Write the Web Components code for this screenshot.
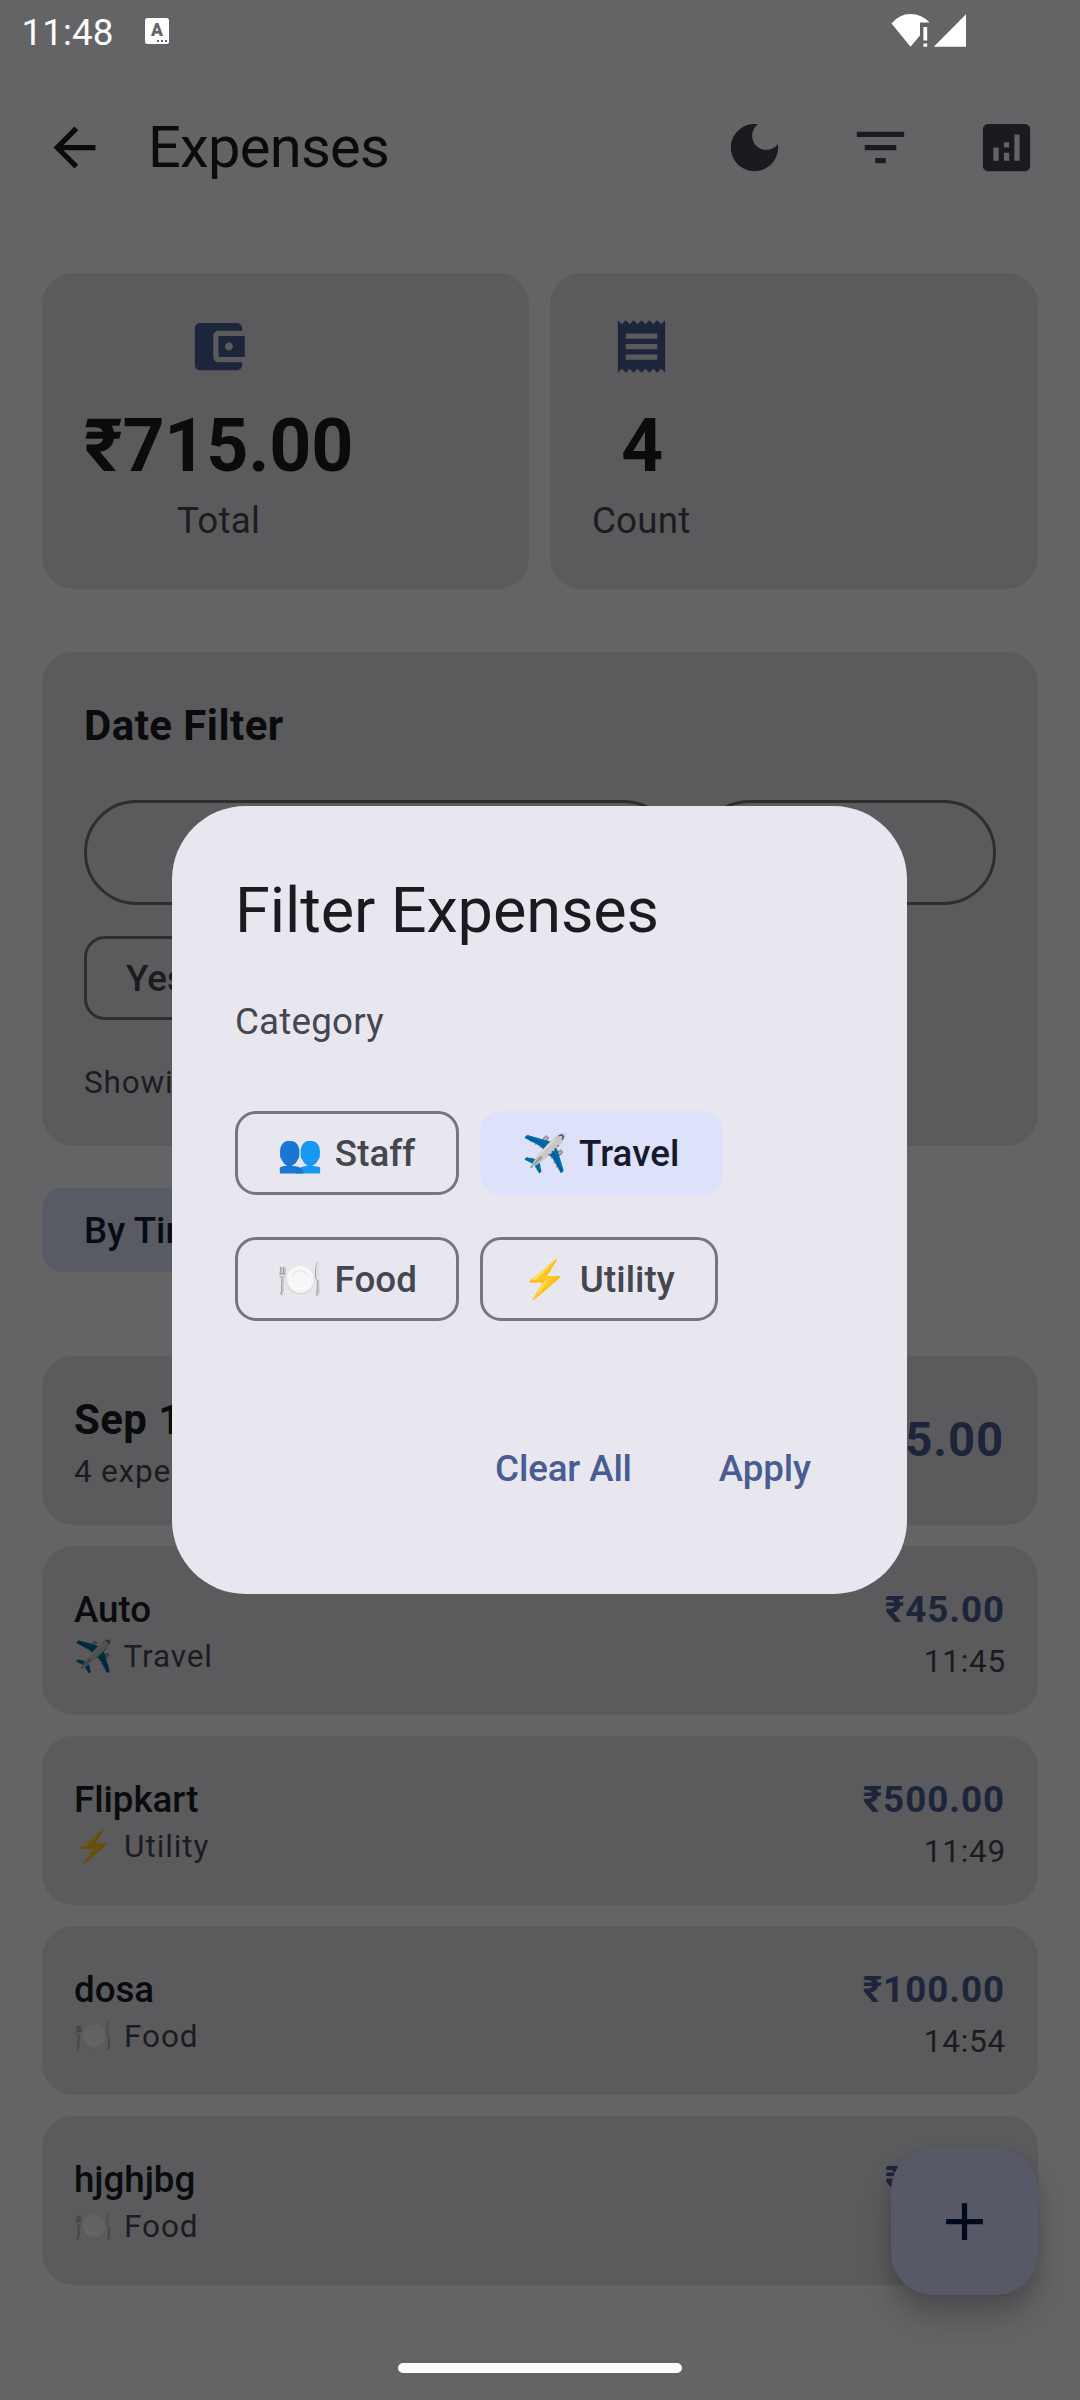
<!DOCTYPE html>
<html lang="en">
<head>
<meta charset="utf-8">
<title>Expenses</title>
<style>
  html, body { margin: 0; padding: 0; }
  body { width: 1080px; height: 2400px; overflow: hidden; background: #646466; font-family: Roboto, "Noto Color Emoji", sans-serif; }
</style>
</head>
<body>
<expense-app></expense-app>
<script>
const define = (name, html, setup) => {
  const tpl = document.createElement('template');
  tpl.innerHTML = html;
  customElements.define(name, class extends HTMLElement {
    constructor() {
      super();
      this.attachShadow({ mode: 'open' }).append(tpl.content.cloneNode(true));
    }
    connectedCallback() { if (setup) setup(this, this.shadowRoot); }
  });
};

const ICONS = {
  back: 'M20 11H7.83l5.59-5.59L12 4l-8 8 8 8 1.41-1.41L7.83 13H20v-2z',
  moon: 'M12 3c-4.97 0-9 4.03-9 9s4.03 9 9 9 9-4.03 9-9c0-.46-.04-.92-.1-1.36-.98 1.37-2.58 2.26-4.4 2.26-2.98 0-5.4-2.42-5.4-5.4 0-1.81.89-3.42 2.26-4.4-.44-.06-.9-.1-1.36-.1z',
  filter: 'M10 18h4v-2h-4v2zM3 6v2h18V6H3zm3 7h12v-2H6v2z',
  analytics: 'M19 3H5c-1.1 0-2 .9-2 2v14c0 1.1.9 2 2 2h14c1.1 0 2-.9 2-2V5c0-1.1-.9-2-2-2zM9 17H7v-5h2v5zm4 0h-2v-3h2v3zm0-5h-2v-2h2v2zm4 5h-2V7h2v10z',
  wallet: 'M21 18v1c0 1.1-.9 2-2 2H5c-1.11 0-2-.9-2-2V5c0-1.1.89-2 2-2h14c1.1 0 2 .9 2 2v1h-9c-1.11 0-2 .9-2 2v8c0 1.1.89 2 2 2h9zm-9-2h10V8H12v8zm4-2.5c-.83 0-1.5-.67-1.5-1.5s.67-1.5 1.5-1.5 1.5.67 1.5 1.5-.67 1.5-1.5 1.5z',
  receipt: 'M18 17H6v-2h12v2zm0-4H6v-2h12v2zm0-4H6V7h12v2zM3 22l1.5-1.5L6 22l1.5-1.5L9 22l1.5-1.5L12 22l1.5-1.5L15 22l1.5-1.5L18 22l1.5-1.5L21 22V2l-1.5 1.5L18 2l-1.5 1.5L15 2l-1.5 1.5L12 2l-1.5 1.5L9 2 7.5 3.5 6 2 4.5 3.5 3 2v20z',
  plus: 'M19 13h-6v6h-2v-6H5v-2h6V5h2v6h6v2z'
};

define('m-icon', `
<style>:host{display:block;width:63px;height:63px;flex:none}svg{display:block;width:100%;height:100%;fill:currentColor}</style>
<svg viewBox="0 0 24 24"><path/></svg>`,
  (el, root) => root.querySelector('path').setAttribute('d', ICONS[el.getAttribute('name')]));

define('status-bar', `
<style>
:host{display:flex;height:66px;color:#fff;box-sizing:border-box;padding-left:21.5px}
.time{font-size:36.75px;line-height:66px;width:123.5px;letter-spacing:.1px}
.badge{width:24px;height:26px;margin-top:18px;border-radius:2.5px;background:#fff;color:#646466;font:900 17.5px/25px Roboto,sans-serif;text-align:center;position:relative}
.badge i{position:absolute;right:2px;bottom:2px;width:10px;height:2px;background:linear-gradient(90deg,#646466 0 2px,#fff 2px 4px,#646466 4px 6px,#fff 6px 8px,#646466 8px 10px)}
svg{display:block;margin:14px 113px 0 auto}
</style>
<span class="time">11:48</span><span class="badge">A<i></i></span>
<svg width="76" height="33" viewBox="0 0 76 33" fill="#fff">
<path d="M0.5 9.5Q8 0 19.5 0T38.5 8.5H29V21.5L19.5 32.7Z"/>
<path d="M32.4 13h3.8v13.5h-3.8zM32.4 29.5h3.8v3.3h-3.8z"/>
<path d="M42.8 32.7L75 0.3V32.7Z"/>
</svg>`);

define('app-bar', `
<style>
:host{display:flex;align-items:center;height:163px;color:#1b1b1f;padding:0 10.5px 0 43px}
m-icon[name=back]{color:#0a0b0c}
h1{margin:-2px auto 0 42px;font-size:57.75px;line-height:74px;font-weight:400;letter-spacing:-.7px;color:#0a0b0c}
.btn{width:126px;display:flex;justify-content:center}
</style>
<m-icon name="back"></m-icon><h1><slot></slot></h1>
<span class="btn"><m-icon name="moon"></m-icon></span><span class="btn"><m-icon name="filter"></m-icon></span><span class="btn"><m-icon name="analytics"></m-icon></span>`);

define('stat-card', `
<style>
:host{display:flex;height:316px;box-sizing:border-box;padding:42px;border-radius:31.5px;background:#5b5b5d}
div{display:flex;flex-direction:column;align-items:center}
m-icon{color:#1d253a}
b{margin-top:21px;font-size:73.5px;line-height:95px;letter-spacing:-.25px;color:#0a0b0c}
span{font-size:36.75px;line-height:53px;letter-spacing:.2px;color:#1c1c20}
:host([icon=receipt]) span{padding-right:1.5px}
</style>
<div><m-icon></m-icon><b><slot></slot></b><span></span></div>`,
  (el, root) => {
    const old = root.querySelector('m-icon'), ic = document.createElement('m-icon');
    ic.setAttribute('name', el.getAttribute('icon'));
    old.replaceWith(ic);
    root.querySelector('span').textContent = el.getAttribute('label');
  });

define('m-chip', `
<style>
:host{display:inline-flex;align-items:center;height:84px;box-sizing:border-box;padding:0 39px;border:3px solid var(--line,#757680);border-radius:21px;color:var(--ink,#45464f);font-size:36.75px;line-height:53px;font-weight:500;letter-spacing:.05px;white-space:pre}
:host([selected]){border-color:transparent;background:var(--fill,#dde1f9);background-clip:border-box;background-origin:border-box;color:var(--ink-on,#161b2c)}
::slotted(span){display:inline-block;width:48.7px}
</style><slot></slot>`);

define('date-filter', `
<style>
:host{display:block;height:494px;box-sizing:border-box;padding:42px;border-radius:31.5px;background:#5b5b5d;--line:#2e2e31;--ink:#1c1c20}
h2{margin:0 0 43px;font-size:42px;line-height:63px;font-weight:700;letter-spacing:.45px;color:#0a0b0c}
.fields{display:flex;gap:21px;margin-bottom:31px}
.fields i{box-sizing:border-box;height:105px;border:3px solid #2e2e31;border-radius:53px;flex:1 1 0}
.fields i:first-child{flex-grow:2}
p{margin:42px 0 0;font-size:31.5px;line-height:42px;letter-spacing:.8px;color:#1c1c20;height:41px}
m-chip{display:flex;width:max-content}
</style>
<h2>Date Filter</h2><div class="fields"><i></i><i></i></div><m-chip>Yesterday</m-chip><p>Showing</p>`);

define('day-card', `
<style>
:host{display:flex;justify-content:space-between;align-items:center;height:169px;box-sizing:border-box;padding:0 34px 0 32px;border-radius:31.5px;background:#5b5b5d}
h3{margin:0;font-size:42px;line-height:63px;letter-spacing:.4px;color:#0a0b0c}
p{margin:0;font-size:31.5px;line-height:42px;letter-spacing:.8px;color:#1c1c20}
b{font-size:47.25px;letter-spacing:.9px;margin-top:-1px;color:#1d253a}
</style>
<div><h3>Sep 1</h3><p>4 expenses</p></div><b><slot></slot></b>`);

define('expense-row', `
<style>
:host{display:flex;justify-content:space-between;align-items:center;height:169px;box-sizing:border-box;padding:0 32px;border-radius:31.5px;background:#5b5b5d}
h3{margin:-1px 0 0;font-size:36.75px;line-height:53px;font-weight:500;letter-spacing:-.05px;color:#0a0b0c}
p{margin:0;height:42px;font-size:31.5px;line-height:42px;letter-spacing:.9px;color:#1c1c20}
.emoji{display:inline-block;width:41.4px;white-space:nowrap;text-indent:.6px;filter:brightness(.4)}
.right{text-align:right}
b{display:block;font-size:36.75px;line-height:63px;letter-spacing:1px;margin-right:.8px;color:#1d253a}
.time{letter-spacing:.75px}
</style>
<div><h3></h3><p><span class="emoji"></span> <slot></slot></p></div>
<div class="right"><b></b><p class="time"></p></div>`,
  (el, root) => {
    root.querySelector('h3').textContent = el.getAttribute('name');
    root.querySelector('.emoji').textContent = el.getAttribute('emoji');
    root.querySelector('b').textContent = el.getAttribute('amount');
    root.querySelector('.time').textContent = el.getAttribute('time');
  });

define('add-button', `
<style>
:host{display:flex;align-items:center;justify-content:center;position:absolute;left:891px;top:2148px;width:147px;height:147px;border-radius:42px;background:#575967;color:#000a1c;box-shadow:0 20px 30px rgba(0,0,0,.22),0 4px 12px rgba(0,0,0,.08)}
</style><m-icon name="plus"></m-icon>`);

define('filter-dialog', `
<style>
:host{display:flex;flex-direction:column;position:absolute;left:172px;top:806px;width:735px;height:788px;box-sizing:border-box;padding:63px;border-radius:73.5px;background:#e8e7f0}
h2{margin:0;font-size:63px;line-height:84px;font-weight:400;letter-spacing:-.1px;color:#1b1b1f}
p{margin:42px 0 63px;font-size:36.75px;line-height:53px;letter-spacing:.2px;color:#45464f}
.chips{display:flex;gap:21px;margin-bottom:42px}
.w1{width:224px}.w2{width:243px}.w3{width:237.5px}
.actions{display:flex;justify-content:flex-end;align-items:center;height:126px;margin-top:auto;padding-right:33.2px;gap:87px;color:#495d92;font-size:36.75px;line-height:53px;font-weight:500;letter-spacing:-.15px}
</style>
<h2>Filter Expenses</h2><p>Category</p>
<div class="chips"><m-chip class="w1"><span>👥</span> Staff</m-chip><m-chip class="w2" selected><span>✈️</span> Travel</m-chip></div>
<div class="chips"><m-chip class="w1"><span>🍽️</span> Food</m-chip><m-chip class="w3"><span>⚡</span> Utility</m-chip></div>
<div class="actions"><span>Clear All</span><span>Apply</span></div>`);

define('expense-app', `
<style>
:host{display:block;position:relative;width:1080px;height:2400px;overflow:hidden;background:#646466}
main{display:flex;flex-direction:column;padding:44px 42px 0}
.stats{display:grid;grid-template-columns:487px 488px;gap:21px;margin-bottom:63px}
.sort{margin:42px 0 84px;display:flex;--fill:#585a64;--ink-on:#090b12}
.list{display:flex;flex-direction:column;gap:21px}
.handle{position:absolute;left:398px;top:2363px;width:284px;height:10px;border-radius:5px;background:#fff}
</style>
<status-bar></status-bar>
<app-bar>Expenses</app-bar>
<main>
<div class="stats"><stat-card icon="wallet" label="Total">₹715.00</stat-card><stat-card icon="receipt" label="Count">4</stat-card></div>
<date-filter></date-filter>
<div class="sort"><m-chip selected>By Time</m-chip></div>
<div class="list">
<day-card>₹715.00</day-card>
<expense-row name="Auto" emoji="✈️" amount="₹45.00" time="11:45">Travel</expense-row>
<expense-row name="Flipkart" emoji="⚡" amount="₹500.00" time="11:49">Utility</expense-row>
<expense-row name="dosa" emoji="🍽️" amount="₹100.00" time="14:54">Food</expense-row>
<expense-row name="hjghjbg" emoji="🍽️" amount="₹70.00" time="14:54">Food</expense-row>
</div>
</main>
<add-button></add-button>
<filter-dialog></filter-dialog>
<div class="handle"></div>`);
</script>
</body>
</html>
